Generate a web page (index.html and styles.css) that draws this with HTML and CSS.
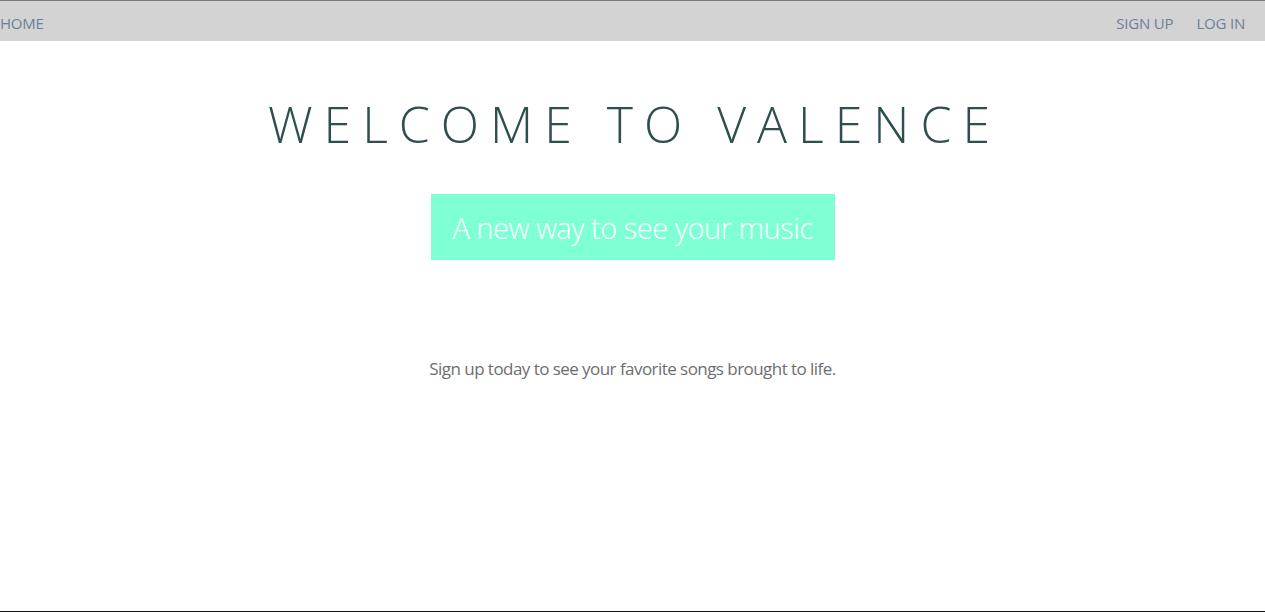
FILE: index.html
```html
<!DOCTYPE html>
<html>
<head>
<meta charset="utf-8">
<link rel="stylesheet" href="styles.css">
</head>
<body>
<nav class="nav">
  <a class="nav-link home" href="#">HOME</a>
  <div class="nav-right">
    <a class="nav-link" href="#">SIGN UP</a>
    <a class="nav-link" href="#">LOG IN</a>
  </div>
</nav>
<main class="hero">
  <h1 class="title">WELCOME TO VALENCE</h1>
  <div class="tagline">A new way to see your music</div>
  <p class="subtitle">Sign up today to see your favorite songs brought to life.</p>
</main>
<div class="bottom-line"></div>
</body>
</html>
```
FILE: styles.css
```css
html, body {
  margin: 0;
  padding: 0;
  height: 100%;
  background: #fff;
  font-family: "Open Sans", "Lato", sans-serif;
}
body {
  display: flex;
  flex-direction: column;
}
.nav {
  display: flex;
  justify-content: space-between;
  align-items: center;
  box-sizing: border-box;
  height: 41px;
  padding-top: 4px;
  background: #d3d3d3;
  border-top: 1px solid #7a7a7a;
}
.nav-link {
  color: #6b7f99;
  text-decoration: none;
  font-size: 15px;
  letter-spacing: -0.2px;
}
.nav-right {
  display: flex;
  gap: 23px;
  padding-right: 20px;
}
.hero {
  flex: 1;
  display: flex;
  flex-direction: column;
  align-items: center;
}
.title {
  margin: 53px 0 0 0;
  font-weight: 300;
  font-size: 50px;
  line-height: 60px;
  letter-spacing: 11px;
  padding-left: 4px;
  color: #2f4f4f;
}
.tagline {
  margin-top: 40px;
  width: 404px;
  height: 66px;
  background: #7fffd4;
  color: #fff;
  font-size: 29px;
  font-weight: 300;
  display: flex;
  align-items: center;
  justify-content: center;
  letter-spacing: -0.5px;
}
.subtitle {
  margin: 97px 0 0 0;
  color: #6e6e6e;
  font-size: 17px;
  letter-spacing: -0.55px;
}
.bottom-line {
  height: 1px;
  background: #111;
  margin-bottom: 1px;
}
```
